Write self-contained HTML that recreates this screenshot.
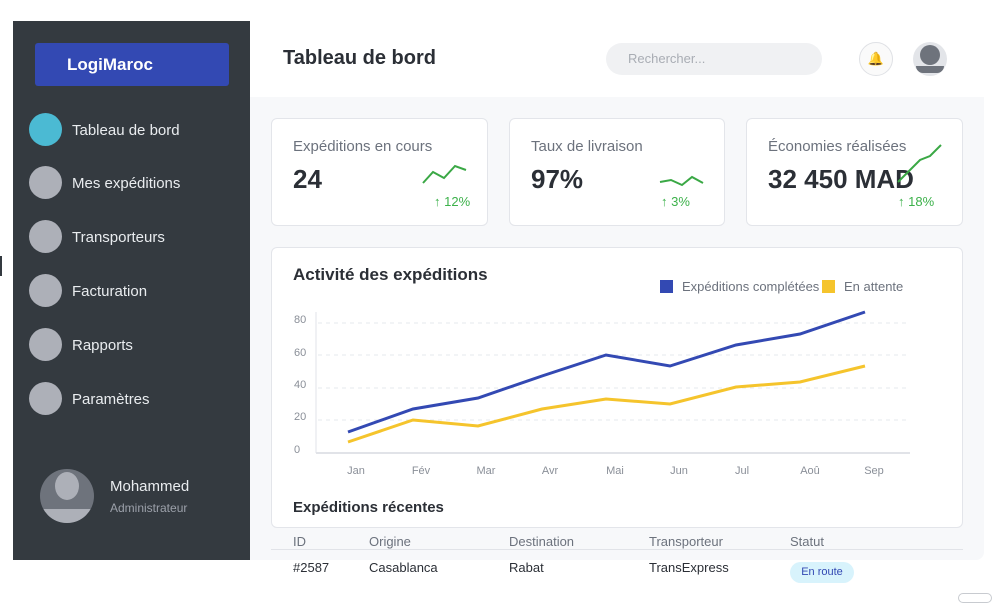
<!DOCTYPE html>
<html><head><meta charset="utf-8"><style>
*{margin:0;padding:0;box-sizing:border-box}
body{width:994px;height:598px;background:#fff;font-family:"Liberation Sans",sans-serif;position:relative;overflow:hidden}
.abs{position:absolute}
.side{left:13px;top:21px;width:237px;height:539px;background:#343a40}
.logo{left:35px;top:43px;width:194px;height:43px;background:#3349b3;border-radius:3px;color:#fff;font-weight:bold;font-size:17px;line-height:43px;padding-left:32px}
.nav{left:29px;font-size:15px;color:#e9ecef}
.nav i{position:absolute;left:0;top:0;width:33px;height:33px;border-radius:50%;background:#adb0b8}
.nav span{position:absolute;left:43px;top:9px;white-space:nowrap}
.main{left:250px;top:97px;width:734px;height:463px;background:#f7f8fa;border-bottom-right-radius:8px}
.card{background:#fff;border:1px solid #e3e5ea;border-radius:6px}
.lbl{font-size:15px;color:#6c727d}
.val{font-size:26px;font-weight:bold;color:#2b2f36}
.pct{font-size:13px;color:#3cb14a}
.th{font-size:13px;color:#6c727d}
.td{font-size:13px;color:#2b2f36}
</style></head><body>
<div class="abs side"></div>
<div class="abs" style="left:0;top:256px;width:2px;height:20px;background:#343a40"></div>
<div class="abs logo">LogiMaroc</div>
<div class="abs nav" style="top:113px"><i style="background:#4bbad3"></i><span>Tableau de bord</span></div>
<div class="abs nav" style="top:166px"><i></i><span>Mes expéditions</span></div>
<div class="abs nav" style="top:220px"><i></i><span>Transporteurs</span></div>
<div class="abs nav" style="top:274px"><i></i><span>Facturation</span></div>
<div class="abs nav" style="top:328px"><i></i><span>Rapports</span></div>
<div class="abs nav" style="top:382px"><i></i><span>Paramètres</span></div>
<div class="abs" style="left:40px;top:469px;width:54px;height:54px;border-radius:50%;background:#6e737c;overflow:hidden">
<div class="abs" style="left:15px;top:3px;width:24px;height:28px;border-radius:50%;background:#adb0b8"></div>
<div class="abs" style="left:0;top:40px;width:54px;height:14px;background:#adb0b8"></div></div>
<div class="abs" style="left:110px;top:478px;font-size:15px;color:#e9ecef">Mohammed</div>
<div class="abs" style="left:110px;top:501px;font-size:12px;color:#9ca1aa">Administrateur</div>

<div class="abs" style="left:283px;top:47px;font-size:20px;font-weight:bold;color:#2b2f36">Tableau de bord</div>
<div class="abs" style="left:606px;top:43px;width:216px;height:32px;border-radius:16px;background:#f0f1f3;font-size:13px;color:#a9adb4;line-height:32px;padding-left:22px">Rechercher...</div>
<div class="abs" style="left:859px;top:42px;width:34px;height:34px;border-radius:50%;border:1px solid #dfe1e5;background:#fafafa;text-align:center;line-height:32px;font-size:13px;color:#f0b400">🔔</div>
<div class="abs" style="left:913px;top:42px;width:34px;height:34px;border-radius:50%;background:#e3e5e9;overflow:hidden">
<div class="abs" style="left:7px;top:3px;width:20px;height:20px;border-radius:50%;background:#6e737c"></div>
<div class="abs" style="left:3px;top:24px;width:28px;height:7px;border-radius:0 0 14px 14px;background:#6e737c"></div></div>

<div class="abs main"></div>
<div class="abs card" style="left:271px;top:118px;width:217px;height:108px"></div>
<div class="abs card" style="left:509px;top:118px;width:216px;height:108px"></div>
<div class="abs card" style="left:746px;top:118px;width:217px;height:108px"></div>
<div class="abs lbl" style="left:293px;top:138px">Expéditions en cours</div>
<div class="abs val" style="left:293px;top:164px">24</div>
<div class="abs pct" style="left:434px;top:194px">↑ 12%</div>
<div class="abs lbl" style="left:531px;top:138px">Taux de livraison</div>
<div class="abs val" style="left:531px;top:164px">97%</div>
<div class="abs pct" style="left:661px;top:194px">↑ 3%</div>
<div class="abs lbl" style="left:768px;top:138px">Économies réalisées</div>
<div class="abs val" style="left:768px;top:164px">32 450 MAD</div>
<div class="abs pct" style="left:898px;top:194px">↑ 18%</div>
<svg class="abs" style="left:0;top:0" width="994" height="598">
<g fill="none" stroke="#3aa845" stroke-width="2">
<polyline points="423,183 433,172 444,178 455,166 466,170"/>
<polyline points="660,182 671,180 682,185 692,177 703,183"/>
<polyline points="898,182 920,160 930,156 941,145"/>
</g></svg>

<div class="abs card" style="left:271px;top:247px;width:692px;height:281px"></div>
<div class="abs" style="left:293px;top:265px;font-size:17px;font-weight:bold;color:#2b2f36">Activité des expéditions</div>
<div class="abs" style="left:660px;top:280px;width:13px;height:13px;background:#3349b3"></div>
<div class="abs" style="left:682px;top:279px;font-size:13px;color:#6c727d">Expéditions complétées</div>
<div class="abs" style="left:822px;top:280px;width:13px;height:13px;background:#f5c42c"></div>
<div class="abs" style="left:844px;top:279px;font-size:13px;color:#6c727d">En attente</div>
<svg class="abs" style="left:0;top:0" width="994" height="598" font-family="Liberation Sans" font-size="11" fill="#8a8f98">
<g stroke="#e6e8ec" stroke-dasharray="4,4"><line x1="318" y1="323" x2="908" y2="323"/><line x1="318" y1="355" x2="908" y2="355"/><line x1="318" y1="388" x2="908" y2="388"/><line x1="318" y1="420" x2="908" y2="420"/></g>
<line x1="316" y1="312" x2="316" y2="453" stroke="#e1e3e8"/>
<line x1="316" y1="453" x2="910" y2="453" stroke="#e1e3e8" stroke-width="2"/>
<text x="294" y="323">80</text><text x="294" y="356">60</text><text x="294" y="388">40</text><text x="294" y="420">20</text><text x="294" y="453">0</text>
<g text-anchor="middle"><text x="356" y="474">Jan</text><text x="421" y="474">Fév</text><text x="486" y="474">Mar</text><text x="550" y="474">Avr</text><text x="615" y="474">Mai</text><text x="679" y="474">Jun</text><text x="742" y="474">Jul</text><text x="810" y="474">Aoû</text><text x="874" y="474">Sep</text></g>
<polyline fill="none" stroke="#3349b3" stroke-width="3" points="348,432 413,409 478,398 542,376 606,355 670,366 736,345 800,334 865,312"/>
<polyline fill="none" stroke="#f5c42c" stroke-width="3" points="348,442 413,420 478,426 542,409 606,399 670,404 736,387 800,382 865,366"/>
</svg>
<div class="abs" style="left:293px;top:499px;font-size:15px;font-weight:bold;color:#2b2f36">Expéditions récentes</div>
<div class="abs" style="left:271px;top:549px;width:692px;height:1px;background:#e1e3e8"></div>
<div class="abs th" style="left:293px;top:534px">ID</div>
<div class="abs th" style="left:369px;top:534px">Origine</div>
<div class="abs th" style="left:509px;top:534px">Destination</div>
<div class="abs th" style="left:649px;top:534px">Transporteur</div>
<div class="abs th" style="left:790px;top:534px">Statut</div>
<div class="abs td" style="left:293px;top:560px">#2587</div>
<div class="abs td" style="left:369px;top:560px">Casablanca</div>
<div class="abs td" style="left:509px;top:560px">Rabat</div>
<div class="abs td" style="left:649px;top:560px">TransExpress</div>
<div class="abs" style="left:790px;top:562px;width:64px;height:21px;border-radius:11px;background:#d8f3fc;color:#3349b3;font-size:11px;text-align:center;line-height:21px">En route</div>
<div class="abs" style="left:958px;top:593px;width:34px;height:10px;border:1px solid #c8cbd0;border-radius:6px"></div>
</body></html>
